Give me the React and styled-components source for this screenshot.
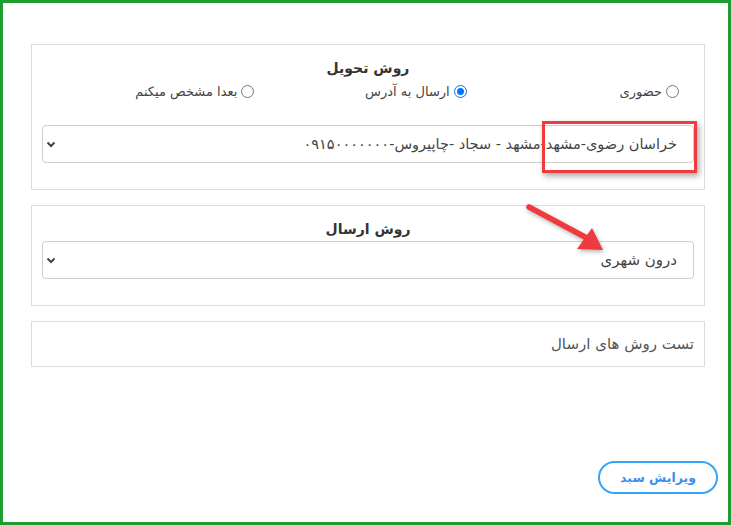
import React from "react";
import styled, { createGlobalStyle } from "styled-components";

const Global = createGlobalStyle`
  html, body { margin: 0; padding: 0; background: #fff; }
  body { font-family: "DejaVu Sans", "Noto Sans", sans-serif; }
  * { box-sizing: border-box; }
`;

const Page = styled.div`
  position: relative;
  height: 525px;
  width: 731px;
  border: 3px solid #1e9c30;
  padding: 41px 23px 28px 28px;
  display: flex;
  flex-direction: column;
  direction: rtl;
  color: #444;
`;

const Card = styled.section`
  border: 1px solid #dcdcdc;
  padding: ${(p) => p.$padding || "11px 10px 26px 10px"};
  margin-bottom: 15px;
  display: flex;
  flex-direction: column;
`;

const Title = styled.h3`
  margin: 0;
  text-align: center;
  font-size: 14px;
  font-weight: bold;
  line-height: 24px;
  color: #333;
`;

const RadioRow = styled.div`
  display: grid;
  grid-template-columns: repeat(3, 1fr);
  padding: 0 15px 0 0;
  height: 20px;
  margin-top: 1px;
  align-items: center;
  margin-bottom: 24px;
`;

const RadioLabel = styled.label`
  display: flex;
  align-items: center;
  gap: 4px;
  font-size: 13px;
  color: #444;
`;

const Radio = styled.span`
  width: 13px;
  height: 13px;
  border-radius: 50%;
  border: 1px solid ${(p) => (p.$checked ? "#0075ff" : "#767676")};
  display: inline-flex;
  align-items: center;
  justify-content: center;
  flex-shrink: 0;
  &::after {
    content: "";
    display: ${(p) => (p.$checked ? "block" : "none")};
    width: 7px;
    height: 7px;
    border-radius: 50%;
    background: #0075ff;
  }
`;

const SelectWrap = styled.div`
  position: relative;
`;

const Select = styled.div`
  height: 38px;
  border: 1px solid #cfcfcf;
  border-radius: 4px;
  display: flex;
  align-items: center;
  justify-content: space-between;
  padding: 0 16px 0 3px;
  font-size: ${(p) => p.$size || "15px"};
  color: #444;
  background: #fff;
`;

const Highlight = styled.div`
  position: absolute;
  top: -4px;
  right: -3px;
  width: 155px;
  height: 52px;
  border: 3px solid #ef3b40;
  box-shadow: 2px 3px 6px rgba(0, 0, 0, 0.35);
  pointer-events: none;
`;

const PlainText = styled.div`
  font-size: 15px;
  color: #555;
  line-height: 22px;
`;

const Footer = styled.div`
  margin-top: auto;
  display: flex;
  justify-content: flex-start;
  margin-right: -13px;
`;

const PillButton = styled.button`
  width: 120px;
  height: 33px;
  border: 2px solid #35a6f7;
  border-radius: 17px;
  background: #fff;
  color: #3b8ef0;
  font-family: "DejaVu Sans", sans-serif;
  font-weight: bold;
  font-size: 12.5px;
  direction: rtl;
`;

const Arrow = styled.svg`
  position: absolute;
  left: 518px;
  top: 196px;
  pointer-events: none;
  filter: drop-shadow(1px 2px 2px rgba(0, 0, 0, 0.3));
`;

const Chevron = () => (
  <svg width="10" height="7" viewBox="0 0 10 7">
    <path d="M1.5 1.5 L5 5 L8.5 1.5" fill="none" stroke="#444" strokeWidth="2" />
  </svg>
);

export default function App() {
  return (
    <>
      <Global />
      <Page>
        <Card>
          <Title>روش تحویل</Title>
          <RadioRow>
            <RadioLabel>
              <Radio />
              حضوری
            </RadioLabel>
            <RadioLabel>
              <Radio $checked />
              ارسال به آدرس
            </RadioLabel>
            <RadioLabel>
              <Radio />
              بعدا مشخص میکنم
            </RadioLabel>
          </RadioRow>
          <SelectWrap>
            <Select $size="14.5px">
              <span>خراسان رضوی-مشهد-مشهد - سجاد -چاپیروس-۰۹۱۵۰۰۰۰۰۰۰</span>
              <Chevron />
            </Select>
            <Highlight />
          </SelectWrap>
        </Card>
        <Card>
          <Title>روش ارسال</Title>
          <Select>
            <span>درون شهری</span>
            <Chevron />
          </Select>
        </Card>
        <Card $padding="11px 10px 11px 10px">
          <PlainText>تست روش های ارسال</PlainText>
        </Card>
        <Footer>
          <PillButton>ویرایش سبد</PillButton>
        </Footer>
        <Arrow width="90" height="60" viewBox="0 0 90 60">
          <line x1="8" y1="8" x2="64" y2="38" stroke="#ef3b40" strokeWidth="5.5" strokeLinecap="round" />
          <polygon points="82,51 56,50 71,29" fill="#ef3b40" />
        </Arrow>
      </Page>
    </>
  );
}
